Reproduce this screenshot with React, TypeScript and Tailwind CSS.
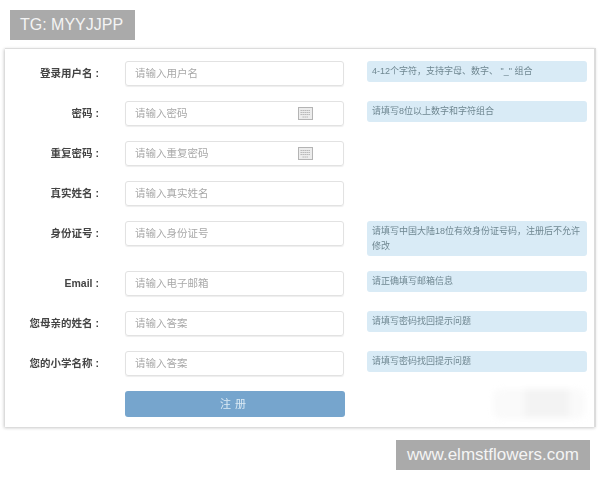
const cjk = "font-['Liberation_Sans','Noto_Sans_CJK_SC',sans-serif]";

function KeyboardIcon() {
  return (
    <svg width="15" height="13" viewBox="0 0 15 13" className="absolute right-[30px] top-[5px] text-[#b4b4b4]" fill="#ececec" stroke="currentColor">
      <rect x="0.5" y="0.5" width="14" height="12" strokeWidth="1" />
      <path d="M2.5 3.5h10M2.5 5.5h10M2.5 7.5h10M4.5 10h6" strokeWidth="1" strokeDasharray="1.4 0.6" />
    </svg>
  );
}

const rows = [
  { label: "登录用户名", placeholder: "请输入用户名", tip: "4-12个字符，支持字母、数字、 \"_\" 组合" },
  { label: "密码", placeholder: "请输入密码", tip: "请填写8位以上数字和字符组合", icon: true },
  { label: "重复密码", placeholder: "请输入重复密码", icon: true },
  { label: "真实姓名", placeholder: "请输入真实姓名" },
  { label: "身份证号", placeholder: "请输入身份证号", tip: "请填写中国大陆18位有效身份证号码，注册后不允许修改", tall: true },
  { label: "Email", placeholder: "请输入电子邮箱", tip: "请正确填写邮箱信息" },
  { label: "您母亲的姓名", placeholder: "请输入答案", tip: "请填写密码找回提示问题" },
  { label: "您的小学名称", placeholder: "请输入答案", tip: "请填写密码找回提示问题" },
];

export default function App() {
  return (
    <div className={`w-[600px] h-[480px] bg-white overflow-hidden flex flex-col pt-[10px] ${cjk}`}>
      <div className="ml-[10px] w-[125px] h-[30px] bg-[#aaaaaa] flex items-center pl-[10px] text-[16px] text-[#f4f4f4]">
        TG: MYYJJPP
      </div>
      <div className="mt-[8px] ml-[5px] w-[591px] h-[379px] shrink-0 bg-white border-t border-r-2 border-[#dcdcdc] shadow-[-1px_1px_3px_rgba(0,0,0,0.22)] pt-[12px] flex flex-col gap-[15px] blur-[0.5px]">
        {rows.map((row) => (
          <div key={row.label} className="flex items-start">
            <div className="w-[94px] h-[25px] pt-[1px] flex items-center justify-end gap-[3px] text-[10.5px] font-bold text-[#444]">
              <span>{row.label}</span>
              <span>:</span>
            </div>
            <div className="relative ml-[26px] w-[219px] h-[25px] shrink-0 rounded-[3px] border border-[#e2e2e2] shadow-[0_1px_1px_rgba(0,0,0,0.07)] flex items-center pl-[9px] text-[10.5px] text-[#a8a8a8]">
              {row.placeholder}
              {row.icon && <KeyboardIcon />}
            </div>
            {row.tip && (
              <div className={`ml-[23px] w-[220px] rounded-[3px] bg-[#d9ebf6] px-[5px] text-[9px] text-[#6f8791] whitespace-pre-wrap ${row.tall ? "h-[35px] py-[3px] leading-[15px]" : "h-[21px] leading-[20px]"}`}>
                {row.tip}
              </div>
            )}
          </div>
        ))}
        <div className="flex items-center">
          <div className="ml-[120px] w-[220px] h-[26px] shrink-0 rounded-[3px] bg-[#76a5cd] flex items-center justify-center text-[11px] text-[#dcebf5] tracking-[4px]">
            注册
          </div>
          <div className="ml-[148px] w-[92px] h-[30px] -my-[2px] rounded-[8px] bg-[#fafafa] blur-[3px] flex justify-center">
            <div className="ml-[16px] w-[44px] h-[28px] bg-[#f3f3f3]" />
          </div>
        </div>
      </div>
      <div className="mt-[13px] ml-[396px] w-[194px] h-[30px] bg-[#aaaaaa] flex items-center justify-center text-[17px] text-[#f4f4f4]">
        www.elmstflowers.com
      </div>
    </div>
  );
}
